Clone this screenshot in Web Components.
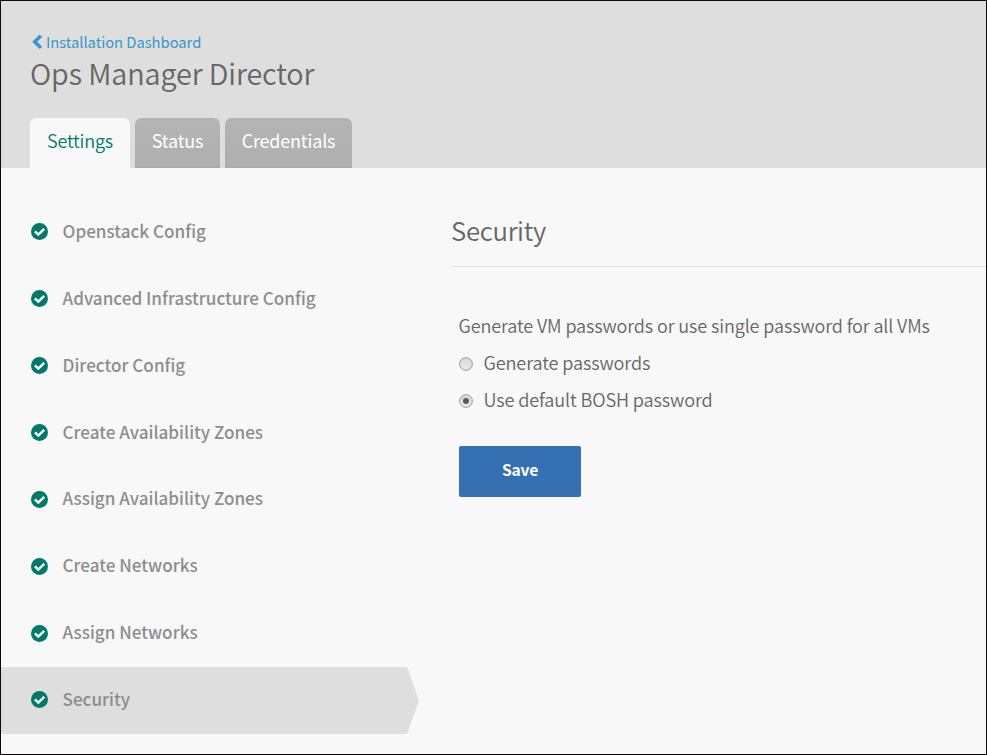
<!DOCTYPE html>
<html lang="en">
<head>
<meta charset="utf-8">
<title>Ops Manager Director</title>
<style>
  body { margin: 0; font-family: "Noto Sans CJK SC", "Open Sans", sans-serif; color: #666; }
</style>
</head>
<body>
<ops-page>
  <ops-header slot="header" heading="Ops Manager Director" back="Installation Dashboard">
    <ops-tab active style="width:100px">Settings</ops-tab>
    <ops-tab style="width:85px">Status</ops-tab>
    <ops-tab style="width:127px">Credentials</ops-tab>
  </ops-header>
  <ops-nav slot="nav">
    <ops-nav-item>Openstack Config</ops-nav-item>
    <ops-nav-item>Advanced Infrastructure Config</ops-nav-item>
    <ops-nav-item>Director Config</ops-nav-item>
    <ops-nav-item>Create Availability Zones</ops-nav-item>
    <ops-nav-item>Assign Availability Zones</ops-nav-item>
    <ops-nav-item>Create Networks</ops-nav-item>
    <ops-nav-item>Assign Networks</ops-nav-item>
    <ops-nav-item active>Security</ops-nav-item>
  </ops-nav>
  <ops-panel heading="Security">
    <ops-label>Generate VM passwords or use single password for all VMs</ops-label>
    <ops-radio>Generate passwords</ops-radio>
    <ops-radio checked>Use default BOSH password</ops-radio>
    <ops-button>Save</ops-button>
  </ops-panel>
</ops-page>

<script>
const define = (name, html) => customElements.define(name, class extends HTMLElement {
  constructor() {
    super();
    this.attachShadow({ mode: 'open' }).innerHTML = html;
  }
  connectedCallback() {
    this.shadowRoot.querySelectorAll('[data-attr]').forEach(el => {
      el.textContent = this.getAttribute(el.dataset.attr);
    });
  }
});

define('ops-page', `
<style>
  :host { display: flex; flex-direction: column; box-sizing: border-box; width: 987px; height: 755px;
          border: 1px solid #0c0a0b; background: #f8f8f8; overflow: hidden; }
  .body { display: grid; grid-template-columns: 418px 1fr; column-gap: 32px; flex: 1; }
</style>
<slot name="header"></slot>
<div class="body"><slot name="nav"></slot><slot></slot></div>`);

define('ops-header', `
<style>
  :host { display: flex; flex-direction: column; box-sizing: border-box; height: 167px; padding: 31px 0 0 29px; background: #dedede; }
  a { display: flex; align-items: center; height: 20px; font-size: 14.8px; letter-spacing: -0.05px; line-height: 20px; color: #3795cf; white-space: nowrap; }
  svg { width: 12px; height: 16px; margin: 0 3px 0 1px; }
  h1 { margin: 0; height: 65px; font-size: 28.8px; letter-spacing: -0.12px; font-weight: 350; line-height: 41px; color: #666; white-space: nowrap; }
  nav { display: flex; gap: 5px; height: 50px; margin-top: 1px; }
</style>
<a><svg viewBox="0 0 12 16"><path d="M9.9 1.7 3.7 7.8l6.2 6.1" fill="none" stroke="#3795cf" stroke-width="3.4"/></svg><span data-attr="back"></span></a>
<h1 data-attr="heading"></h1>
<nav><slot></slot></nav>`);

define('ops-tab', `
<style>
  :host { display: flex; justify-content: center; box-sizing: border-box; height: 50px; border-radius: 6px 6px 0 0;
          font-size: 18px; letter-spacing: -0.2px; line-height: 44px; font-weight: 400; color: #fff;
          background: linear-gradient(#b4b4b4, #afafaf 94%, #a9a9a9); }
  :host([active]) { background: #f8f8f8; color: #00796b; font-weight: 350; }
</style>
<slot></slot>`);

define('ops-nav', `
<style>
  :host { display: flex; flex-direction: column; padding-top: 31px; }
</style>
<slot></slot>`);

define('ops-nav-item', `
<style>
  :host { display: flex; align-items: center; box-sizing: border-box; height: 66.86px; padding-left: 30px;
          font-size: 17.1px; font-weight: 500; color: #8d8d8d; white-space: nowrap; }
  :host([active]) { background: #dedede; clip-path: polygon(0 0, 406px 0, 418px 50%, 406px 100%, 0 100%); }
  svg { width: 17px; height: 17px; margin: 0 14.5px 1px 0; }
  span { line-height: 24px; padding-bottom: 3px; }
</style>
<svg viewBox="0 0 17 17"><circle cx="8.5" cy="8.5" r="8.5" fill="#00796b"/><path d="M3.9 8.3 7.3 11.6 13.2 5.8" fill="none" stroke="#fff" stroke-width="2.5"/></svg>
<span><slot></slot></span>`);

define('ops-panel', `
<style>
  :host { display: flex; flex-direction: column; }
  h2 { margin: 0; box-sizing: border-box; height: 99px; padding-top: 42px; border-bottom: 1px solid #e0e0e0;
       font-size: 25.7px; letter-spacing: -0.28px; font-weight: 350; line-height: 40px; color: #666; }
  form { display: flex; flex-direction: column; align-items: flex-start; padding: 40px 0 0 8px; }
</style>
<h2 data-attr="heading"></h2>
<form><slot></slot></form>`);

define('ops-label', `
<style>
  :host { display: block; height: 37px; margin-left: -0.5px; font-size: 18px; letter-spacing: -0.1px; font-weight: 350; line-height: 37px; white-space: nowrap; }
</style>
<slot></slot>`);

define('ops-radio', `
<style>
  :host { display: flex; align-items: center; gap: 10.4px; height: 37px; font-size: 18.1px; letter-spacing: -0.11px; font-weight: 350; line-height: 37px; white-space: nowrap; }
  i { display: grid; place-items: center; box-sizing: border-box; width: 14px; height: 14px; margin-top: 2px; border: 1px solid #aaa;
      border-radius: 50%; background: linear-gradient(#d9d9d9, #ebebeb); box-shadow: inset 0 0 1px #999; }
  :host([checked]) i::after { content: ""; width: 6px; height: 6px; border-radius: 50%; background: #5a5a5a; }
</style>
<i></i><slot></slot>`);

define('ops-button', `
<style>
  :host { display: block; width: 122px; height: 51px; margin-top: 28px; border-radius: 2px; background: #3571b2; color: #fff;
          font-size: 15.6px; letter-spacing: -0.2px; font-weight: 700; line-height: 46px; text-align: center; }
</style>
<slot></slot>`);
</script>
</body>
</html>
